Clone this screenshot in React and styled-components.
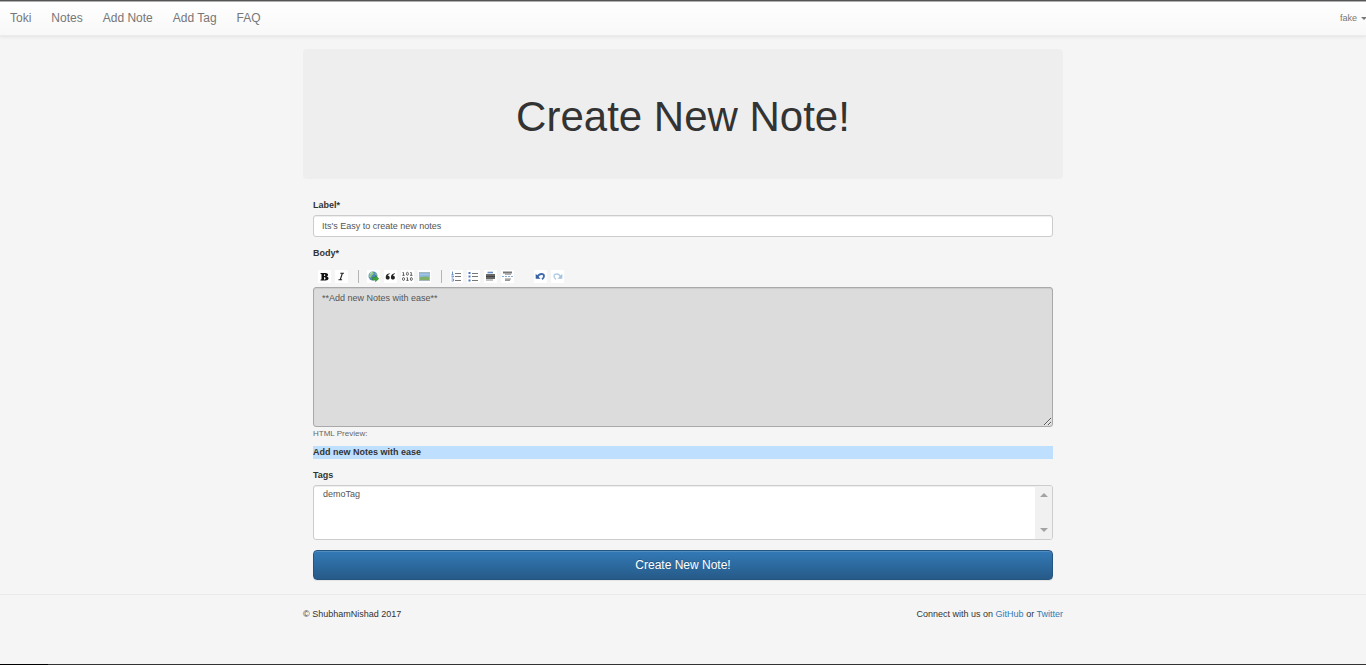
import React from "react";
import styled, { createGlobalStyle } from "styled-components";

const GlobalStyle = createGlobalStyle`
  *, *::before, *::after { box-sizing: border-box; }
  body {
    margin: 0;
    background: #f5f5f5;
    color: #333;
    font: 9px/13px "Liberation Sans", Arial, sans-serif;
  }
  #root { min-height: 100vh; display: flex; }
`;

const Page = styled.div`
  flex: 1;
  display: flex;
  flex-direction: column;
  min-width: 0;
`;

const Navbar = styled.header`
  display: flex;
  justify-content: space-between;
  align-items: center;
  height: 36px;
  border-top: 1px solid #555;
  border-bottom: 1px solid #ececec;
  background: linear-gradient(#fff, #f8f8f8);
  box-shadow: inset 0 1px 0 #b0b0b0, 0 1px 3px rgba(0, 0, 0, 0.08);
`;

const NavLinks = styled.nav`
  display: flex;
  gap: 20px;
  padding: 0 0 1px 10px;
`;

const NavLink = styled.a`
  color: #777;
  font-size: 12px;
  line-height: 14px;
  text-decoration: none;
`;

const UserMenu = styled.button`
  display: flex;
  align-items: center;
  gap: 4px;
  padding: 0;
  border: 0;
  background: none;
  color: #777;
  font: inherit;
`;

const Caret = styled.span`
  border: 3px solid transparent;
  border-top-color: #777;
  border-bottom: 0;
  margin-right: -1px;
`;

const Container = styled.div`
  width: 100%;
  max-width: 760px;
  margin: 0 auto;
`;

const Jumbotron = styled.div`
  display: flex;
  align-items: center;
  justify-content: center;
  height: 130px;
  margin: 13px 0 20px;
  padding-top: 6px;
  border-radius: 4px;
  background: #eee;
`;

const Title = styled.h1`
  margin: 0;
  font-size: 42px;
  line-height: 46px;
  font-weight: 400;
`;

const Form = styled.form`
  display: flex;
  flex-direction: column;
  padding: 0 10px;
`;

const Label = styled.label`
  margin-bottom: 3px;
  font-weight: 700;
`;

const TextInput = styled.input`
  height: 22px;
  margin-bottom: 10px;
  padding: 0 8px;
  border: 1px solid #ccc;
  border-radius: 3px;
  background: #fff;
  box-shadow: inset 0 1px 1px rgba(0, 0, 0, 0.075);
  color: #555;
  font: inherit;
`;

const Toolbar = styled.div`
  display: flex;
  align-items: center;
  gap: 4px;
  height: 13px;
  margin: 7px 0 4px;
  padding-left: 5px;
`;

const ToolButton = styled.button`
  display: flex;
  width: 13px;
  height: 13px;
  padding: 0;
  border: 0;
  background: #fff;
`;

const Separator = styled.span`
  width: 1px;
  height: 13px;
  margin: 0 4px 0 6px;
  background: #b5b5b5;
`;

const Spacer = styled.span`
  width: 12px;
`;

const BodyInput = styled.textarea`
  display: block;
  width: 100%;
  height: 140px;
  padding: 4px 8px;
  border: 1px solid #a9a9a9;
  border-radius: 3px;
  background: #dcdcdc;
  box-shadow: inset 0 1px 1px rgba(0, 0, 0, 0.075);
  color: #555;
  font: inherit;
  resize: vertical;
`;

const PreviewCaption = styled.p`
  margin: 0 0 6px;
  color: #666;
  font-size: 8px;
`;

const Preview = styled.div`
  margin-bottom: 10px;
  background: #bfdfff;
  font-weight: 700;
`;

const ListBox = styled.div`
  display: flex;
  height: 55px;
  margin-bottom: 10px;
  border: 1px solid #ccc;
  border-radius: 3px;
  background: #fff;
  box-shadow: inset 0 1px 1px rgba(0, 0, 0, 0.075);
  overflow: hidden;
`;

const TagSelect = styled.select`
  flex: 1;
  min-width: 0;
  padding: 3px 7px;
  border: 0;
  outline: 0;
  background: transparent;
  color: #555;
  font: inherit;
  overflow: hidden;
`;

const ScrollTrack = styled.div`
  display: flex;
  flex-direction: column;
  justify-content: space-between;
  align-items: center;
  width: 17px;
  padding: 7px 0;
  background: #f1f1f1;
`;

const Arrow = styled.span`
  border: 4px solid transparent;
  border-top: ${(p) => (p.$up ? "0" : "4px solid #a3a3a3")};
  border-bottom: ${(p) => (p.$up ? "4px solid #a3a3a3" : "0")};
`;

const Submit = styled.button`
  height: 30px;
  padding: 0;
  border: 1px solid #245580;
  border-radius: 4px;
  background: linear-gradient(#337ab7, #265a88);
  box-shadow: inset 0 1px 0 rgba(255, 255, 255, 0.15), 0 1px 1px rgba(0, 0, 0, 0.075);
  color: #fff;
  font: 400 12px/16px "Liberation Sans", Arial, sans-serif;
  text-shadow: 0 -1px 0 rgba(0, 0, 0, 0.2);
`;

const Footer = styled.footer`
  margin-top: 14px;
  padding-top: 13px;
  border-top: 1px solid #eaeaea;
`;

const FooterRow = styled(Container)`
  display: flex;
  justify-content: space-between;
`;

const FooterLink = styled.a`
  color: #337ab7;
  text-decoration: none;
`;

const BottomEdge = styled.div`
  height: 1px;
  margin-top: auto;
  background: linear-gradient(to right, #000 48px, #333 48px);
`;

const Icon = ({ children }) => (
  <svg width="13" height="13" viewBox="0 0 13 13" aria-hidden="true">
    {children}
  </svg>
);

const icons = {
  bold: (
    <Icon>
      <path d="M2.500 3h4.800c3.600 0 3.400 3 1.200 3.500 3 .4 2.700 4-1 4h-5v-.8l1-.4V4.200l-1-.4z" fill="#111" />
      <path d="M6 4.200v1.900c1.800.2 1.800-2 0-1.900zM6 7.200v2.200c2.200.2 2-2.400 0-2.200z" fill="#fff" />
    </Icon>
  ),
  italic: (
    <Icon>
      <path d="M5.300 3.300h3.600M3.500 9.800h3.600M7.400 3.300L5.200 9.800" fill="none" stroke="#222" strokeWidth="1.100" />
    </Icon>
  ),
  link: (
    <Icon>
      <circle cx="6" cy="6" r="4.500" fill="#5087bd" />
      <path d="M3 2.800C5 1 7 2 6.800 4L5 5.500 3.500 8 1.800 6.500zM7.500 3l2.300 1-.5 2z" fill="#8cc887" />
      <path d="M3 3.500l2-1" stroke="#c7e3ef" />
      <path d="M5.500 7.300h3V5.700l3.300 3-3.300 3v-1.700h-3z" fill="#42a835" stroke="#287e26" strokeWidth=".5" />
    </Icon>
  ),
  quote: (
    <Icon>
      <path d="M5.700 3.300C3.200 3.600 1.700 5.200 1.700 7.500c0 2.800 4 2.600 4 .2 0-1.400-.9-2-2-1.900.2-.9.900-1.500 2-1.800zM10.900 3.300C8.400 3.600 6.900 5.200 6.900 7.500c0 2.800 4 2.600 4 .2 0-1.400-.9-2-2-1.900.2-.9.900-1.500 2-1.800z" fill="#222" />
    </Icon>
  ),
  code: (
    <Icon>
      <g fill="none" stroke="#555" strokeWidth=".9">
        <path d="M1.500 2.500h1v3M1.300 5.300h2.400M9.300 2.500h1v3M9 5.300h2.500M5.500 7.700h1v3M5.200 10.300h2.500" />
        <ellipse cx="6.400" cy="3.800" rx="1" ry="1.500" />
        <ellipse cx="2.500" cy="9" rx="1" ry="1.500" />
        <ellipse cx="10.300" cy="9" rx="1" ry="1.500" />
      </g>
    </Icon>
  ),
  image: (
    <Icon>
      <rect x="1.500" y="2.500" width="10" height="8" fill="#90b9df" stroke="#a8b7bd" />
      <path d="M2 7.200q4-1.200 9-.5V10H2z" fill="#80b069" />
      <path d="M2 4.500h9" stroke="#a2c6ea" />
    </Icon>
  ),
  ordered: (
    <Icon>
      <path d="M2.500 1.500v3M1.500 4.500h2M1.500 6h2v1h-2M1.500 9h2v2h-2" fill="none" stroke="#6b94cc" />
      <path d="M5 3.500h6M5 6.500h6M5 10.500h6" stroke="#777" />
    </Icon>
  ),
  unordered: (
    <Icon>
      <path d="M1.500 3h2M1.500 6.500h2M1.500 10.500h2" stroke="#4779c4" strokeWidth="2" />
      <path d="M5 3.500h6M5 6.500h6M5 10.500h6" stroke="#777" />
    </Icon>
  ),
  heading: (
    <Icon>
      <path d="M3.500 2.500h5.500" stroke="#688fc5" strokeWidth="1.600" />
      <path d="M2 4h9v5H2z" fill="#666" />
      <path d="M2 6.500h9" stroke="#444" />
      <path d="M2 10h7" stroke="#888" />
    </Icon>
  ),
  rule: (
    <Icon>
      <path d="M2 2.500h9" stroke="#777" strokeWidth="2" />
      <path d="M4 4.200h6M4 9h6" stroke="#888" />
      <path d="M1 6.500h11" stroke="#83abd9" strokeDasharray="2 1" />
      <path d="M4 10.200h5" stroke="#666" />
    </Icon>
  ),
  undo: (
    <Icon>
      <path d="M3.500 7C4.500 3.500 10 3 10 6c0 1.300-.7 2.500-2 3.300" fill="none" stroke="#416bad" strokeWidth="1.900" />
      <path d="M1.700 3.700v5h4.800z" fill="#345fa3" />
    </Icon>
  ),
  redo: (
    <Icon>
      <path d="M9.500 7C8.500 3.500 3 3 3 6c0 1.300.7 2.500 2 3.300" fill="none" stroke="#b4cde5" strokeWidth="1.400" />
      <path d="M11.300 3.700v5H6.500z" fill="#a5c3df" />
    </Icon>
  ),
};

const Tool = ({ name, label }) => (
  <ToolButton type="button" aria-label={label}>
    {icons[name]}
  </ToolButton>
);

const navItems = ["Toki", "Notes", "Add Note", "Add Tag", "FAQ"];

export default function App() {
  return (
    <>
      <GlobalStyle />
      <Page>
        <Navbar>
          <NavLinks>
            {navItems.map((item) => (
              <NavLink key={item} href="#">{item}</NavLink>
            ))}
          </NavLinks>
          <UserMenu type="button">
            fake <Caret />
          </UserMenu>
        </Navbar>
        <Container as="main">
          <Jumbotron>
            <Title>Create New Note!</Title>
          </Jumbotron>
          <Form onSubmit={(e) => e.preventDefault()}>
            <Label htmlFor="label">Label*</Label>
            <TextInput id="label" defaultValue="Its's Easy to create new notes" />
            <Label htmlFor="body">Body*</Label>
            <Toolbar>
              <Tool name="bold" label="Strong" />
              <Tool name="italic" label="Emphasis" />
              <Separator />
              <Tool name="link" label="Hyperlink" />
              <Tool name="quote" label="Blockquote" />
              <Tool name="code" label="Code sample" />
              <Tool name="image" label="Image" />
              <Separator />
              <Tool name="ordered" label="Numbered list" />
              <Tool name="unordered" label="Bulleted list" />
              <Tool name="heading" label="Heading" />
              <Tool name="rule" label="Horizontal rule" />
              <Spacer />
              <Tool name="undo" label="Undo" />
              <Tool name="redo" label="Redo" />
            </Toolbar>
            <BodyInput id="body" defaultValue="**Add new Notes with ease**" />
            <PreviewCaption>HTML Preview:</PreviewCaption>
            <Preview>Add new Notes with ease</Preview>
            <Label htmlFor="tags">Tags</Label>
            <ListBox>
              <TagSelect id="tags" multiple size={4}>
                <option>demoTag</option>
              </TagSelect>
              <ScrollTrack aria-hidden="true">
                <Arrow $up />
                <Arrow />
              </ScrollTrack>
            </ListBox>
            <Submit type="submit">Create New Note!</Submit>
          </Form>
        </Container>
        <Footer>
          <FooterRow>
            <span>© ShubhamNishad 2017</span>
            <span>
              Connect with us on <FooterLink href="#">GitHub</FooterLink> or{" "}
              <FooterLink href="#">Twitter</FooterLink>
            </span>
          </FooterRow>
        </Footer>
        <BottomEdge />
      </Page>
    </>
  );
}
